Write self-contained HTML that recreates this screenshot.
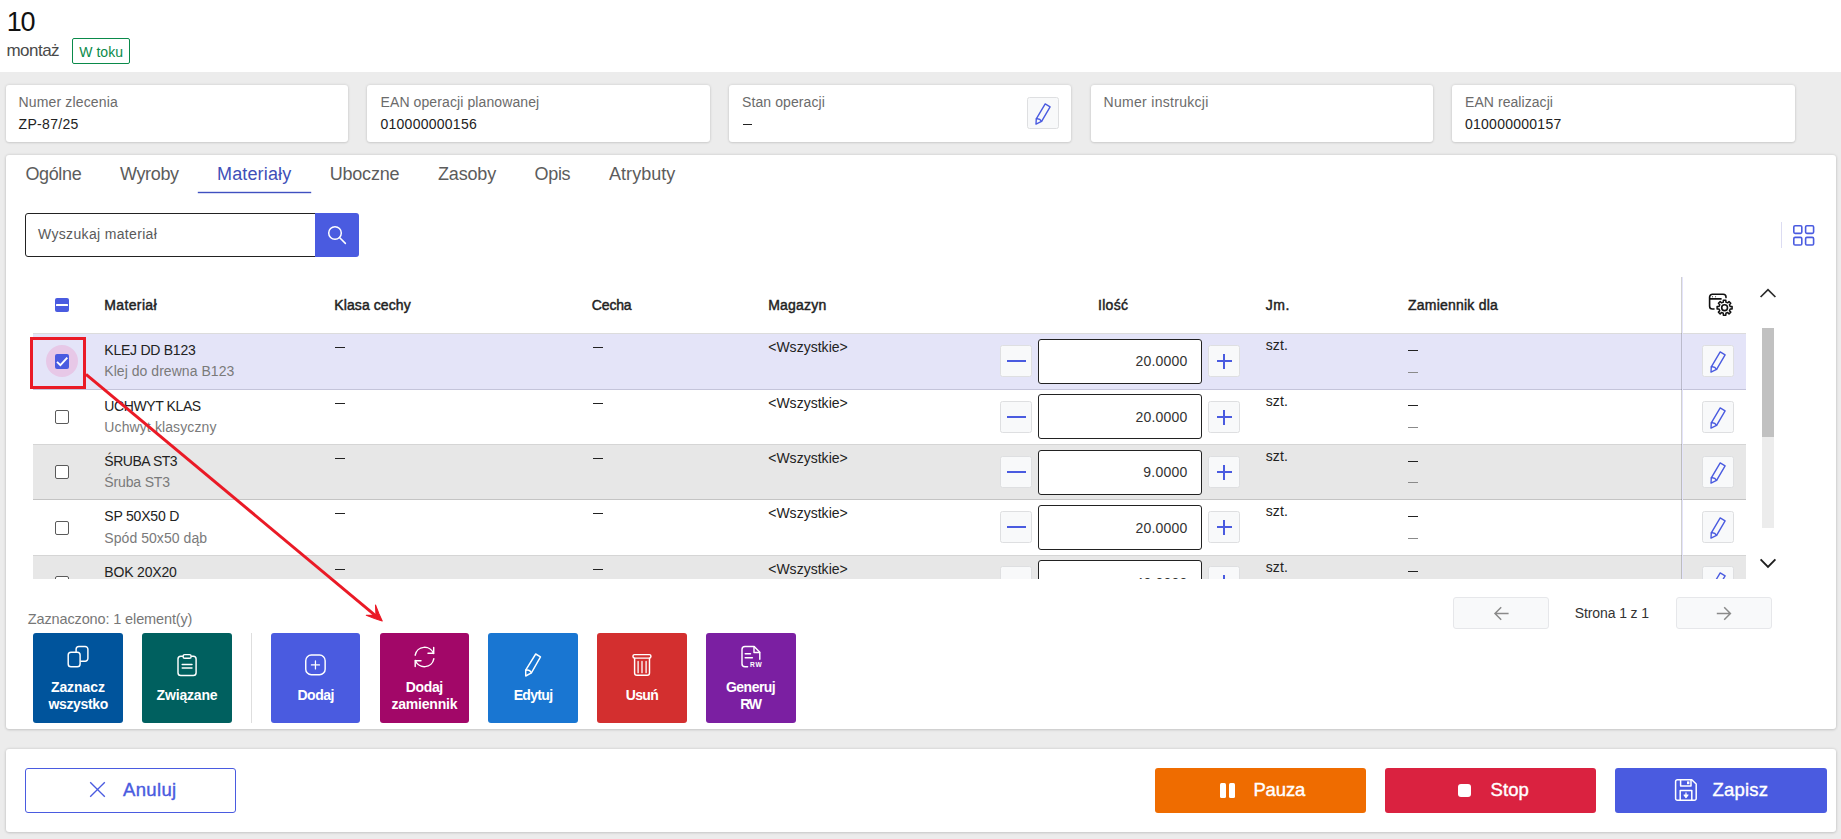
<!DOCTYPE html>
<html lang="pl"><head><meta charset="utf-8"><title>Operacja 10 - montaż</title>
<style>
html,body{margin:0;padding:0}
body{width:1841px;height:839px;position:relative;overflow:hidden;background:#ececec;font-family:"Liberation Sans",sans-serif;color:#222}
.a{position:absolute;box-sizing:border-box}
.t{position:absolute;white-space:nowrap;line-height:1}
.card{position:absolute;box-sizing:border-box;top:85px;width:342px;height:57px;background:#fff;border-radius:3px;box-shadow:0 0 3px rgba(0,0,0,.15),0 1px 2px rgba(0,0,0,.08)}
.panel{position:absolute;box-sizing:border-box;background:#fff;border-radius:3px;box-shadow:0 0 3px rgba(0,0,0,.15),0 1px 3px rgba(0,0,0,.10)}
.sq{position:absolute;box-sizing:border-box;width:31.5px;height:31.5px;background:#f8f9fa;border:1px solid #dedfe1;border-radius:2.5px}
.sq svg{position:absolute}
.row{position:absolute;left:0;width:1713px;box-sizing:border-box;border-bottom:1px solid #cfcfd4}
.cb{position:absolute;box-sizing:border-box;width:14px;height:14px;border:1px solid #5a5a5a;border-radius:2px;background:#fff}
.qty{position:absolute;box-sizing:border-box;left:1005px;width:164px;height:45px;border:1px solid #222;border-radius:3px;background:#fff}
.dash{position:absolute;height:1px;background:#222;width:10px}
.ab{position:absolute;box-sizing:border-box;top:633px;width:90px;height:90px;border-radius:3px;color:#fff;font-weight:700;font-size:14px;text-align:center}
.ab svg{position:absolute}
.ab .l{position:absolute;left:0;width:90px;line-height:17px;white-space:nowrap}
.bb{position:absolute;box-sizing:border-box;top:768px;height:45px;border-radius:3px}
</style></head><body>
<!-- header -->
<div class="a" style="left:0;top:0;width:1841px;height:72px;background:#fff"></div>
<div class="a" style="left:72px;top:38px;width:58px;height:26px;border:1px solid #0a8a4a;border-radius:2px;background:#fff"></div>
<!-- info cards -->
<div class="card" style="left:6px"></div>
<div class="card" style="left:367px;width:343px"></div>
<div class="card" style="left:729px"></div>
<div class="card" style="left:1091px"></div>
<div class="card" style="left:1452px;width:343px"></div>
<div class="a" style="left:742.7px;top:124px;width:9.5px;height:1px;background:#222"></div>
<div class="sq" style="left:1027px;top:97px"><svg style="left:-0.4px;top:-0.45px" class="a" width="31" height="31" viewBox="0 0 31 31" fill="none" stroke="#4a5be0" stroke-width="1.4" stroke-linejoin="round" stroke-linecap="round"><path d="M17.2 5.9 L22.1 8.8 L13.6 23.4 L8 26.1 L8.3 20.8 Z"/><path d="M8.4 20.8 Q11.9 20.3 13.5 23.3"/></svg></div>
<!-- main panel -->
<div class="panel" style="left:6px;top:155px;width:1830px;height:574px"></div>
<div class="a" style="left:198px;top:192px;width:113px;height:1px;background:#3f50c0;box-shadow:0 0 0 .2px #3f50c0"></div>
<!-- search -->
<div class="a" style="left:25px;top:213px;width:291px;height:44px;border:1px solid #222;border-radius:3px 0 0 3px;background:#fff"></div>
<div class="a" style="left:315px;top:213px;width:44px;height:44px;background:#4a5be0;border-radius:0 3px 3px 0">
<svg class="a" style="left:0;top:0" width="44" height="44" viewBox="0 0 44 44" fill="none" stroke="#fff" stroke-width="1.5" stroke-linecap="round"><circle cx="20" cy="20" r="6.3"/><path d="M24.5 24.5 L30.4 30.4"/></svg>
</div>
<!-- grid toggle -->
<div class="a" style="left:1781px;top:222px;width:1px;height:26px;background:#dcdcf2"></div>
<svg class="a" style="left:1792px;top:224px" width="24" height="23" viewBox="0 0 24 23" fill="none" stroke="#4a5be0" stroke-width="1.6"><rect x="1.8" y="1.8" width="8" height="7.6" rx="1.3"/><rect x="13.6" y="1.8" width="8" height="7.6" rx="1.3"/><rect x="1.8" y="13.4" width="8" height="7.6" rx="1.3"/><rect x="13.6" y="13.4" width="8" height="7.6" rx="1.3"/></svg>
<!-- table header -->
<div class="a" style="left:55px;top:298px;width:14px;height:14px;background:#4a5be0;border-radius:2px"><div class="a" style="left:1px;top:6px;width:12px;height:2px;background:#fff;border-radius:.5px"></div></div>
<!-- gear/window icon -->
<svg class="a" style="left:1707px;top:292px" width="28" height="26" viewBox="0 0 28 26" fill="none" stroke="#111" stroke-width="1.6" stroke-linecap="round" stroke-linejoin="round">
<path d="M7 17 H5.4 a2.8 2.8 0 0 1 -2.8 -2.8 V5.1 a2.8 2.8 0 0 1 2.8 -2.8 H16.2 a2.8 2.8 0 0 1 2.8 2.8 V5.6"/><path d="M2.8 6.9 H14"/>
<circle cx="5.5" cy="4.7" r=".55" fill="#111" stroke="none"/><circle cx="8.6" cy="4.7" r=".55" fill="#111" stroke="none"/>
<circle cx="17.6" cy="15.7" r="2.9"/>
<path d="M16.31 10.15 L16.35 8.20 L18.85 8.20 L18.89 10.15 L20.62 10.86 L22.02 9.52 L23.78 11.28 L22.44 12.68 L23.15 14.41 L25.10 14.45 L25.10 16.95 L23.15 16.99 L22.44 18.72 L23.78 20.12 L22.02 21.88 L20.62 20.54 L18.89 21.25 L18.85 23.20 L16.35 23.20 L16.31 21.25 L14.58 20.54 L13.18 21.88 L11.42 20.12 L12.76 18.72 L12.05 16.99 L10.10 16.95 L10.10 14.45 L12.05 14.41 L12.76 12.68 L11.42 11.28 L13.18 9.52 L14.58 10.86 Z" stroke-width="1.5"/>
</svg>
<!-- scroll -->
<svg class="a" style="left:1758px;top:286px" width="20" height="14" viewBox="0 0 20 14" fill="none" stroke="#2b2b2b" stroke-width="1.7"><path d="M2.6 11 L10 3.6 L17.4 11"/></svg>
<svg class="a" style="left:1758px;top:556px" width="20" height="14" viewBox="0 0 20 14" fill="none" stroke="#1f1f1f" stroke-width="1.9"><path d="M2.6 3.4 L10 10.8 L17.4 3.4"/></svg>
<div class="a" style="left:1762px;top:328px;width:12px;height:109px;background:#c1c1c1"></div>
<div class="a" style="left:1762px;top:437px;width:12px;height:91px;background:#ececec"></div>
<!-- table body (clipped) -->
<div class="a" style="left:33px;top:333px;width:1713px;height:245.5px;overflow:hidden">
<div class="row" style="top:0px;height:57px;background:#e4e4f8;border-bottom-color:#c4c4da;border-top:1px solid #dcdcdc"></div>
<div class="a" style="left:13px;top:12px;width:32px;height:32px;border-radius:16px;background:#e7c8e7"></div>
<div class="a" style="left:22px;top:21px;width:14px;height:15px;background:#4a5be0;border-radius:2px"><svg class="a" style="left:0;top:0" width="14" height="15" viewBox="0 0 14 15" fill="none" stroke="#fff" stroke-width="1.9"><path d="M2 7.9 L5.4 11.1 L12.3 3.7"/></svg></div>
<div class="dash" style="left:301.5px;top:14px"></div>
<div class="dash" style="left:559.5px;top:14px"></div>
<div class="dash" style="left:1375px;top:17px"></div>
<div class="dash" style="left:1375px;top:39px;background:#8a8a8a"></div>
<div class="sq" style="left:967px;top:12px"><div class="a" style="left:6px;top:14px;width:19px;height:2px;background:#4a5be0"></div></div>
<div class="qty" style="top:6px"></div>
<div class="sq" style="left:1175px;top:12px"><div class="a" style="left:7.5px;top:14px;width:15px;height:2px;background:#4a5be0"></div><div class="a" style="left:14px;top:7.5px;width:2px;height:15px;background:#4a5be0"></div></div>
<div class="sq" style="left:1669px;top:12px"><svg style="left:-0.4px;top:-0.45px" class="a" width="31" height="31" viewBox="0 0 31 31" fill="none" stroke="#4a5be0" stroke-width="1.4" stroke-linejoin="round" stroke-linecap="round"><path d="M17.2 5.9 L22.1 8.8 L13.6 23.4 L8 26.1 L8.3 20.8 Z"/><path d="M8.4 20.8 Q11.9 20.3 13.5 23.3"/></svg></div>
<div class="row" style="top:57px;height:54px;background:#ffffff;border-bottom-color:#ffffff"></div>
<div class="cb" style="left:22px;top:77px"></div>
<div class="dash" style="left:301.5px;top:70px"></div>
<div class="dash" style="left:559.5px;top:70px"></div>
<div class="dash" style="left:1375px;top:72px"></div>
<div class="dash" style="left:1375px;top:94px;background:#8a8a8a"></div>
<div class="sq" style="left:967px;top:68px"><div class="a" style="left:6px;top:14px;width:19px;height:2px;background:#4a5be0"></div></div>
<div class="qty" style="top:61px"></div>
<div class="sq" style="left:1175px;top:68px"><div class="a" style="left:7.5px;top:14px;width:15px;height:2px;background:#4a5be0"></div><div class="a" style="left:14px;top:7.5px;width:2px;height:15px;background:#4a5be0"></div></div>
<div class="sq" style="left:1669px;top:68px"><svg style="left:-0.4px;top:-0.45px" class="a" width="31" height="31" viewBox="0 0 31 31" fill="none" stroke="#4a5be0" stroke-width="1.4" stroke-linejoin="round" stroke-linecap="round"><path d="M17.2 5.9 L22.1 8.8 L13.6 23.4 L8 26.1 L8.3 20.8 Z"/><path d="M8.4 20.8 Q11.9 20.3 13.5 23.3"/></svg></div>
<div class="row" style="top:111px;height:56px;background:#e7e7e7;border-bottom-color:#c4c4c4;border-top:1px solid #d5d5d5"></div>
<div class="cb" style="left:22px;top:132px"></div>
<div class="dash" style="left:301.5px;top:125px"></div>
<div class="dash" style="left:559.5px;top:125px"></div>
<div class="dash" style="left:1375px;top:128px"></div>
<div class="dash" style="left:1375px;top:149px;background:#8a8a8a"></div>
<div class="sq" style="left:967px;top:123px"><div class="a" style="left:6px;top:14px;width:19px;height:2px;background:#4a5be0"></div></div>
<div class="qty" style="top:117px"></div>
<div class="sq" style="left:1175px;top:123px"><div class="a" style="left:7.5px;top:14px;width:15px;height:2px;background:#4a5be0"></div><div class="a" style="left:14px;top:7.5px;width:2px;height:15px;background:#4a5be0"></div></div>
<div class="sq" style="left:1669px;top:123px"><svg style="left:-0.4px;top:-0.45px" class="a" width="31" height="31" viewBox="0 0 31 31" fill="none" stroke="#4a5be0" stroke-width="1.4" stroke-linejoin="round" stroke-linecap="round"><path d="M17.2 5.9 L22.1 8.8 L13.6 23.4 L8 26.1 L8.3 20.8 Z"/><path d="M8.4 20.8 Q11.9 20.3 13.5 23.3"/></svg></div>
<div class="row" style="top:167px;height:55px;background:#ffffff;border-bottom-color:#ffffff"></div>
<div class="cb" style="left:22px;top:188px"></div>
<div class="dash" style="left:301.5px;top:180px"></div>
<div class="dash" style="left:559.5px;top:180px"></div>
<div class="dash" style="left:1375px;top:183px"></div>
<div class="dash" style="left:1375px;top:205px;background:#8a8a8a"></div>
<div class="sq" style="left:967px;top:178px"><div class="a" style="left:6px;top:14px;width:19px;height:2px;background:#4a5be0"></div></div>
<div class="qty" style="top:172px"></div>
<div class="sq" style="left:1175px;top:178px"><div class="a" style="left:7.5px;top:14px;width:15px;height:2px;background:#4a5be0"></div><div class="a" style="left:14px;top:7.5px;width:2px;height:15px;background:#4a5be0"></div></div>
<div class="sq" style="left:1669px;top:178px"><svg style="left:-0.4px;top:-0.45px" class="a" width="31" height="31" viewBox="0 0 31 31" fill="none" stroke="#4a5be0" stroke-width="1.4" stroke-linejoin="round" stroke-linecap="round"><path d="M17.2 5.9 L22.1 8.8 L13.6 23.4 L8 26.1 L8.3 20.8 Z"/><path d="M8.4 20.8 Q11.9 20.3 13.5 23.3"/></svg></div>
<div class="row" style="top:222px;height:56px;background:#e7e7e7;border-bottom-color:#c4c4c4;border-top:1px solid #d5d5d5"></div>
<div class="cb" style="left:22px;top:243px"></div>
<div class="dash" style="left:301.5px;top:236px"></div>
<div class="dash" style="left:559.5px;top:236px"></div>
<div class="dash" style="left:1375px;top:238px"></div>
<div class="dash" style="left:1375px;top:260px;background:#8a8a8a"></div>
<div class="sq" style="left:967px;top:233px"><div class="a" style="left:6px;top:14px;width:19px;height:2px;background:#4a5be0"></div></div>
<div class="qty" style="top:227px"></div>
<div class="sq" style="left:1175px;top:233px"><div class="a" style="left:7.5px;top:14px;width:15px;height:2px;background:#4a5be0"></div><div class="a" style="left:14px;top:7.5px;width:2px;height:15px;background:#4a5be0"></div></div>
<div class="sq" style="left:1669px;top:233px"><svg style="left:-0.4px;top:-0.45px" class="a" width="31" height="31" viewBox="0 0 31 31" fill="none" stroke="#4a5be0" stroke-width="1.4" stroke-linejoin="round" stroke-linecap="round"><path d="M17.2 5.9 L22.1 8.8 L13.6 23.4 L8 26.1 L8.3 20.8 Z"/><path d="M8.4 20.8 Q11.9 20.3 13.5 23.3"/></svg></div>
<div class="t" style="left:71.3px;top:10.15px;font-size:14px;color:#222;letter-spacing:-0.248px;">KLEJ DD B123</div>
<div class="t" style="left:71.3px;top:31.35px;font-size:14px;color:#7a7a7a;letter-spacing:0.042px;">Klej do drewna B123</div>
<div class="t" style="left:735.2px;top:6.75px;font-size:14px;color:#222;letter-spacing:0.022px;">&lt;Wszystkie&gt;</div>
<div class="t" style="left:1102.5px;top:20.85px;font-size:14px;color:#333;letter-spacing:0.199px;">20.0000</div>
<div class="t" style="left:1232.7px;top:5.15px;font-size:14px;color:#222;letter-spacing:0.18px;">szt.</div>
<div class="t" style="left:71.3px;top:66.15px;font-size:14px;color:#222;letter-spacing:-0.398px;">UCHWYT KLAS</div>
<div class="t" style="left:71.3px;top:87.35px;font-size:14px;color:#7a7a7a;letter-spacing:0.114px;">Uchwyt klasyczny</div>
<div class="t" style="left:735.2px;top:62.75px;font-size:14px;color:#222;letter-spacing:0.022px;">&lt;Wszystkie&gt;</div>
<div class="t" style="left:1102.5px;top:76.85px;font-size:14px;color:#333;letter-spacing:0.199px;">20.0000</div>
<div class="t" style="left:1232.7px;top:61.15px;font-size:14px;color:#222;letter-spacing:0.18px;">szt.</div>
<div class="t" style="left:71.3px;top:121.15px;font-size:14px;color:#222;letter-spacing:-0.459px;">ŚRUBA ST3</div>
<div class="t" style="left:71.3px;top:142.35px;font-size:14px;color:#7a7a7a;letter-spacing:-0.149px;">Śruba ST3</div>
<div class="t" style="left:735.2px;top:117.75px;font-size:14px;color:#222;letter-spacing:0.022px;">&lt;Wszystkie&gt;</div>
<div class="t" style="left:1110.3px;top:131.85px;font-size:14px;color:#333;letter-spacing:0.229px;">9.0000</div>
<div class="t" style="left:1232.7px;top:116.15px;font-size:14px;color:#222;letter-spacing:0.18px;">szt.</div>
<div class="t" style="left:71.3px;top:176.15px;font-size:14px;color:#222;letter-spacing:-0.2px;">SP 50X50 D</div>
<div class="t" style="left:71.3px;top:198.35px;font-size:14px;color:#7a7a7a;letter-spacing:0.058px;">Spód 50x50 dąb</div>
<div class="t" style="left:735.2px;top:172.75px;font-size:14px;color:#222;letter-spacing:0.022px;">&lt;Wszystkie&gt;</div>
<div class="t" style="left:1102.5px;top:187.85px;font-size:14px;color:#333;letter-spacing:0.199px;">20.0000</div>
<div class="t" style="left:1232.7px;top:171.15px;font-size:14px;color:#222;letter-spacing:0.18px;">szt.</div>
<div class="t" style="left:71.3px;top:232.15px;font-size:14px;color:#222;letter-spacing:-0.171px;">BOK 20X20</div>
<div class="t" style="left:71.3px;top:253.35px;font-size:14px;color:#7a7a7a;letter-spacing:-0.13px;">Bok 20x20</div>
<div class="t" style="left:735.2px;top:228.75px;font-size:14px;color:#222;letter-spacing:0.022px;">&lt;Wszystkie&gt;</div>
<div class="t" style="left:1102.5px;top:242.85px;font-size:14px;color:#333;letter-spacing:0.199px;">40.0000</div>
<div class="t" style="left:1232.7px;top:227.15px;font-size:14px;color:#222;letter-spacing:0.18px;">szt.</div>
</div>
<!-- sticky column separator -->
<div class="a" style="left:1681px;top:277px;width:1px;height:301.5px;background:rgba(0,0,0,.18)"></div><div class="a" style="left:1682px;top:277px;width:1px;height:301.5px;background:#e4e4fb"></div>
<!-- pagination -->
<div class="a" style="left:1453px;top:597px;width:96px;height:32px;background:#f8f9fa;border:1px solid #e6e7ea;border-radius:3px"><svg class="a" style="left:39px;top:7px" width="18" height="16" viewBox="0 0 18 16" fill="none" stroke="#8a8a8a" stroke-width="1.5"><path d="M15.6 8.5 H2 M8.2 2.3 L2 8.5 L8.2 14.7"/></svg></div>
<div class="a" style="left:1676px;top:597px;width:96px;height:32px;background:#f8f9fa;border:1px solid #e6e7ea;border-radius:3px"><svg class="a" style="left:39px;top:7px" width="18" height="16" viewBox="0 0 18 16" fill="none" stroke="#8a8a8a" stroke-width="1.5"><path d="M0.8 8.5 H14.4 M8.2 2.3 L14.4 8.5 L8.2 14.7"/></svg></div>
<!-- action buttons -->
<div class="ab" style="left:33px;width:90px;background:#00549c"><svg style="left:0;top:0" width="90" height="90" viewBox="0 0 90 90" stroke="#fff" fill="none" stroke-width="1.45" stroke-linecap="round" stroke-linejoin="round"><rect x="35.2" y="19.2" width="11.9" height="14.6" rx="2.8"/><path d="M43.1 18.6 V16.3 a2.8 2.8 0 0 1 2.8 -2.8 H52.1 a2.8 2.8 0 0 1 2.8 2.8 V25.4 a2.8 2.8 0 0 1 -2.8 2.8 H48"/></svg></div>
<div class="ab" style="left:142px;width:90px;background:#00605f"><svg style="left:0;top:0" width="90" height="90" viewBox="0 0 90 90" stroke="#fff" fill="none" stroke-width="1.45" stroke-linecap="round" stroke-linejoin="round"><path d="M40.6 23.3 H38.8 a2.8 2.8 0 0 0 -2.8 2.8 V39.7 a2.8 2.8 0 0 0 2.8 2.8 H51.3 a2.8 2.8 0 0 0 2.8 -2.8 V26.1 a2.8 2.8 0 0 0 -2.8 -2.8 H49.6"/><rect x="41.1" y="21.6" width="8" height="3.7" rx="1.6"/><path d="M40.2 31.5 H50 M40.2 35 H50"/></svg></div>
<div class="ab" style="left:271px;width:89px;background:#4a5be0"><svg style="left:0;top:0" width="90" height="90" viewBox="0 0 90 90" stroke="#fff" fill="none" stroke-width="1.45" stroke-linecap="round" stroke-linejoin="round"><rect x="34.75" y="22.05" width="19.4" height="19.7" rx="5.6"/><path d="M44.45 27.9 V35.9 M40.4 31.9 H48.5" stroke-width="1.25"/></svg></div>
<div class="ab" style="left:380px;width:89px;background:#a20768"><svg style="left:0;top:0" width="90" height="90" viewBox="0 0 90 90" stroke="#fff" fill="none" stroke-width="1.45" stroke-linecap="round" stroke-linejoin="round"><path d="M53.6 20.5 A9.6 9.6 0 0 0 35.2 22.2"/><path d="M53.7 14.5 V20.3 H48"/><path d="M35.4 27.5 A9.6 9.6 0 0 0 53.8 25.8"/><path d="M35.2 33.5 V27.7 H41"/></svg></div>
<div class="ab" style="left:488px;width:90px;background:#1976d2"><svg style="left:0;top:0" width="90" height="90" viewBox="0 0 90 90" stroke="#fff" fill="none" stroke-width="1.45" stroke-linecap="round" stroke-linejoin="round"><path d="M47.7 21 L52.5 23.8 L43.4 39.8 L37.7 43 L37.7 37.2 Z"/><path d="M37.8 37.2 Q41.6 36.4 43.3 39.7"/></svg></div>
<div class="ab" style="left:597px;width:90px;background:#d32f2f"><svg style="left:0;top:0" width="90" height="90" viewBox="0 0 90 90" stroke="#fff" fill="none" stroke-width="1.45" stroke-linecap="round" stroke-linejoin="round"><rect x="36" y="21.6" width="17.9" height="3.5" rx="1.5"/><path d="M37.6 25.3 V40 a2.3 2.3 0 0 0 2.3 2.3 H50.2 a2.3 2.3 0 0 0 2.3 -2.3 V25.3"/><path d="M41.1 28.4 V39.7 M45 28.4 V39.7 M49.1 28.4 V39.7" stroke-width="1.3"/></svg></div>
<div class="ab" style="left:706px;width:90px;background:#7b1fa2"><svg style="left:0;top:0" width="90" height="90" viewBox="0 0 90 90" stroke="#fff" fill="none" stroke-width="1.45" stroke-linecap="round" stroke-linejoin="round"><path d="M41.6 33.8 H39 a3 3 0 0 1 -3 -3 V16.5 a3 3 0 0 1 3 -3 H48.2 L53.8 19.3 V26.2"/><path d="M48 13.7 V19.4 H53.6"/><path d="M39.2 20.7 H44.5 M39.2 24.7 H46.4"/><text x="44" y="33.9" font-family="Liberation Sans, sans-serif" font-size="6.6" font-weight="700" fill="#fff" stroke="none" letter-spacing="0.9">RW</text></svg></div>
<div class="a" style="left:251px;top:633px;width:1px;height:90px;background:#dedede"></div>
<!-- bottom bar -->
<div class="panel" style="left:6px;top:749px;width:1830px;height:83px"></div>
<div class="bb" style="left:25px;width:211px;border:1px solid #4a5be0;background:#fff"><svg class="a" style="left:62px;top:11px" width="19" height="19" viewBox="0 0 19 19" fill="none" stroke="#4a5be0" stroke-width="1.35"><path d="M2.2 2.2 L16.8 16.8 M16.8 2.2 L2.2 16.8"/></svg></div>
<div class="bb" style="left:1155px;width:211px;background:#ef6c00"><div class="a" style="left:65px;top:15px;width:6px;height:15px;background:#fff;border-radius:1.5px"></div><div class="a" style="left:74px;top:15px;width:6px;height:15px;background:#fff;border-radius:1.5px"></div></div>
<div class="bb" style="left:1385px;width:211px;background:#da2240"><div class="a" style="left:73px;top:16px;width:13px;height:13px;background:#fff;border-radius:3px"></div></div>
<div class="bb" style="left:1615px;width:212px;background:#4a5be0">
<svg class="a" style="left:59px;top:10px" width="24" height="24" viewBox="0 0 24 24" fill="none" stroke="#fff" stroke-width="1.5" stroke-linejoin="round"><path d="M3.4 1.8 H17.8 L22.2 6 V20.4 a1.8 1.8 0 0 1 -1.8 1.8 H3.4 a1.8 1.8 0 0 1 -1.8 -1.8 V3.6 a1.8 1.8 0 0 1 1.8 -1.8 z"/><path d="M6.6 1.8 V8 H17 V1.8"/><rect x="13" y="3.4" width="2.4" height="2.8" fill="#fff" stroke="none"/><path d="M6.2 22 V12.6 H17.8 V22"/><path d="M12 14.4 V18 M10 17 L12 19.6 L14 17 Z" fill="#fff" stroke-width="1.2"/></svg>
</div>
<!-- static text -->
<div class="t" style="left:6.8px;top:8.54px;font-size:27px;color:#111;letter-spacing:-1.323px;">10</div>
<div class="t" style="left:6.5px;top:41.61px;font-size:17px;color:#4a4a4a;letter-spacing:-0.542px;">montaż</div>
<div class="t" style="left:79.3px;top:45.15px;font-size:14px;color:#0a8a4a;letter-spacing:0.02px;">W toku</div>
<div class="t" style="left:18.6px;top:95.15px;font-size:14px;color:#6b6b6b;letter-spacing:0.145px;">Numer zlecenia</div>
<div class="t" style="left:18.6px;top:117.15px;font-size:14px;color:#222;letter-spacing:0.301px;">ZP-87/25</div>
<div class="t" style="left:380.5px;top:95.15px;font-size:14px;color:#6b6b6b;letter-spacing:0.103px;">EAN operacji planowanej</div>
<div class="t" style="left:380.5px;top:117.15px;font-size:14px;color:#222;letter-spacing:0.255px;">010000000156</div>
<div class="t" style="left:742px;top:95.15px;font-size:14px;color:#6b6b6b;letter-spacing:0.099px;">Stan operacji</div>
<div class="t" style="left:1103.6px;top:95.15px;font-size:14px;color:#6b6b6b;letter-spacing:0.29px;">Numer instrukcji</div>
<div class="t" style="left:1465px;top:95.15px;font-size:14px;color:#6b6b6b;letter-spacing:0.061px;">EAN realizacji</div>
<div class="t" style="left:1465px;top:117.15px;font-size:14px;color:#222;letter-spacing:0.255px;">010000000157</div>
<div class="t" style="left:25.4px;top:165.06px;font-size:18px;color:#5c5c5c;letter-spacing:-0.358px;">Ogólne</div>
<div class="t" style="left:120px;top:165.06px;font-size:18px;color:#5c5c5c;letter-spacing:-0.36px;">Wyroby</div>
<div class="t" style="left:217px;top:165.06px;font-size:18px;color:#3f4fb8;letter-spacing:0.152px;">Materiały</div>
<div class="t" style="left:329.7px;top:165.06px;font-size:18px;color:#5c5c5c;letter-spacing:-0.207px;">Uboczne</div>
<div class="t" style="left:438px;top:165.06px;font-size:18px;color:#5c5c5c;letter-spacing:-0.172px;">Zasoby</div>
<div class="t" style="left:534.6px;top:165.06px;font-size:18px;color:#5c5c5c;letter-spacing:-0.354px;">Opis</div>
<div class="t" style="left:609px;top:165.06px;font-size:18px;color:#5c5c5c;letter-spacing:0.046px;">Atrybuty</div>
<div class="t" style="left:38px;top:227.45px;font-size:14px;color:#5a5a5a;letter-spacing:0.337px;">Wyszukaj materiał</div>
<div class="t" style="left:104.3px;top:298.15px;font-size:14px;color:#222;-webkit-text-stroke:.45px #222;letter-spacing:0.363px;">Materiał</div>
<div class="t" style="left:334.3px;top:298.15px;font-size:14px;color:#222;-webkit-text-stroke:.45px #222;letter-spacing:0.092px;">Klasa cechy</div>
<div class="t" style="left:591.8px;top:298.15px;font-size:14px;color:#222;-webkit-text-stroke:.45px #222;letter-spacing:-0.154px;">Cecha</div>
<div class="t" style="left:768.2px;top:298.15px;font-size:14px;color:#222;-webkit-text-stroke:.45px #222;letter-spacing:0.212px;">Magazyn</div>
<div class="t" style="left:1098px;top:298.15px;font-size:14px;color:#222;-webkit-text-stroke:.45px #222;letter-spacing:0.281px;">Ilość</div>
<div class="t" style="left:1265.7px;top:298.15px;font-size:14px;color:#222;-webkit-text-stroke:.45px #222;letter-spacing:0.579px;">Jm.</div>
<div class="t" style="left:1408px;top:298.15px;font-size:14px;color:#222;-webkit-text-stroke:.45px #222;letter-spacing:0.219px;">Zamiennik dla</div>
<div class="t" style="left:27.8px;top:612.03px;font-size:14.5px;color:#777;letter-spacing:-0.131px;">Zaznaczono: 1 element(y)</div>
<div class="t" style="left:1574.7px;top:605.95px;font-size:14px;color:#333;letter-spacing:-0.1px;">Strona 1 z 1</div>
<div class="t" style="left:123px;top:780.64px;font-size:18.5px;color:#4a5be0;-webkit-text-stroke:.4px #4a5be0;letter-spacing:0.344px;">Anuluj</div>
<div class="t" style="left:1253.4px;top:780.64px;font-size:18.5px;color:#fff;-webkit-text-stroke:.4px #fff;letter-spacing:-0.114px;">Pauza</div>
<div class="t" style="left:1490.6px;top:780.64px;font-size:18.5px;color:#fff;-webkit-text-stroke:.4px #fff;letter-spacing:0.084px;">Stop</div>
<div class="t" style="left:1712.5px;top:780.64px;font-size:18.5px;color:#fff;-webkit-text-stroke:.4px #fff;letter-spacing:0.183px;">Zapisz</div>
<div class="t" style="left:50.9px;top:680.15px;font-size:14px;color:#fff;font-weight:700;letter-spacing:-0.067px;">Zaznacz</div>
<div class="t" style="left:48.4px;top:696.75px;font-size:14px;color:#fff;font-weight:700;letter-spacing:-0.331px;">wszystko</div>
<div class="t" style="left:156.6px;top:687.85px;font-size:14px;color:#fff;font-weight:700;letter-spacing:-0.181px;">Związane</div>
<div class="t" style="left:297.5px;top:687.95px;font-size:14px;color:#fff;font-weight:700;letter-spacing:-0.498px;">Dodaj</div>
<div class="t" style="left:405.8px;top:680.15px;font-size:14px;color:#fff;font-weight:700;letter-spacing:-0.378px;">Dodaj</div>
<div class="t" style="left:391.5px;top:696.75px;font-size:14px;color:#fff;font-weight:700;letter-spacing:-0.211px;">zamiennik</div>
<div class="t" style="left:513.7px;top:688.15px;font-size:14px;color:#fff;font-weight:700;letter-spacing:-0.664px;">Edytuj</div>
<div class="t" style="left:625.75px;top:688.05px;font-size:14px;color:#fff;font-weight:700;letter-spacing:-0.675px;">Usuń</div>
<div class="t" style="left:726.0px;top:680.15px;font-size:14px;color:#fff;font-weight:700;letter-spacing:-0.529px;">Generuj</div>
<div class="t" style="left:740.2px;top:696.75px;font-size:14px;color:#fff;font-weight:700;letter-spacing:-1.239px;">RW</div>
<!-- annotation overlay -->
<div class="a" style="left:30px;top:337px;width:56px;height:52px;border:3px solid #ea1a26"></div>
<svg class="a" style="left:0;top:0;pointer-events:none" width="1841" height="839" viewBox="0 0 1841 839"><path d="M86 374.3 L378.5 618.1" stroke="#ea1a26" stroke-width="3" fill="none"/><path d="M375.5 605 L378.8 613.4 L382.2 620.9 L374.6 618.4 L366.3 615.2 L376 615.4 Z" fill="#ea1a26" stroke="#ea1a26" stroke-width="1.1" stroke-linejoin="round"/></svg>
</body></html>
